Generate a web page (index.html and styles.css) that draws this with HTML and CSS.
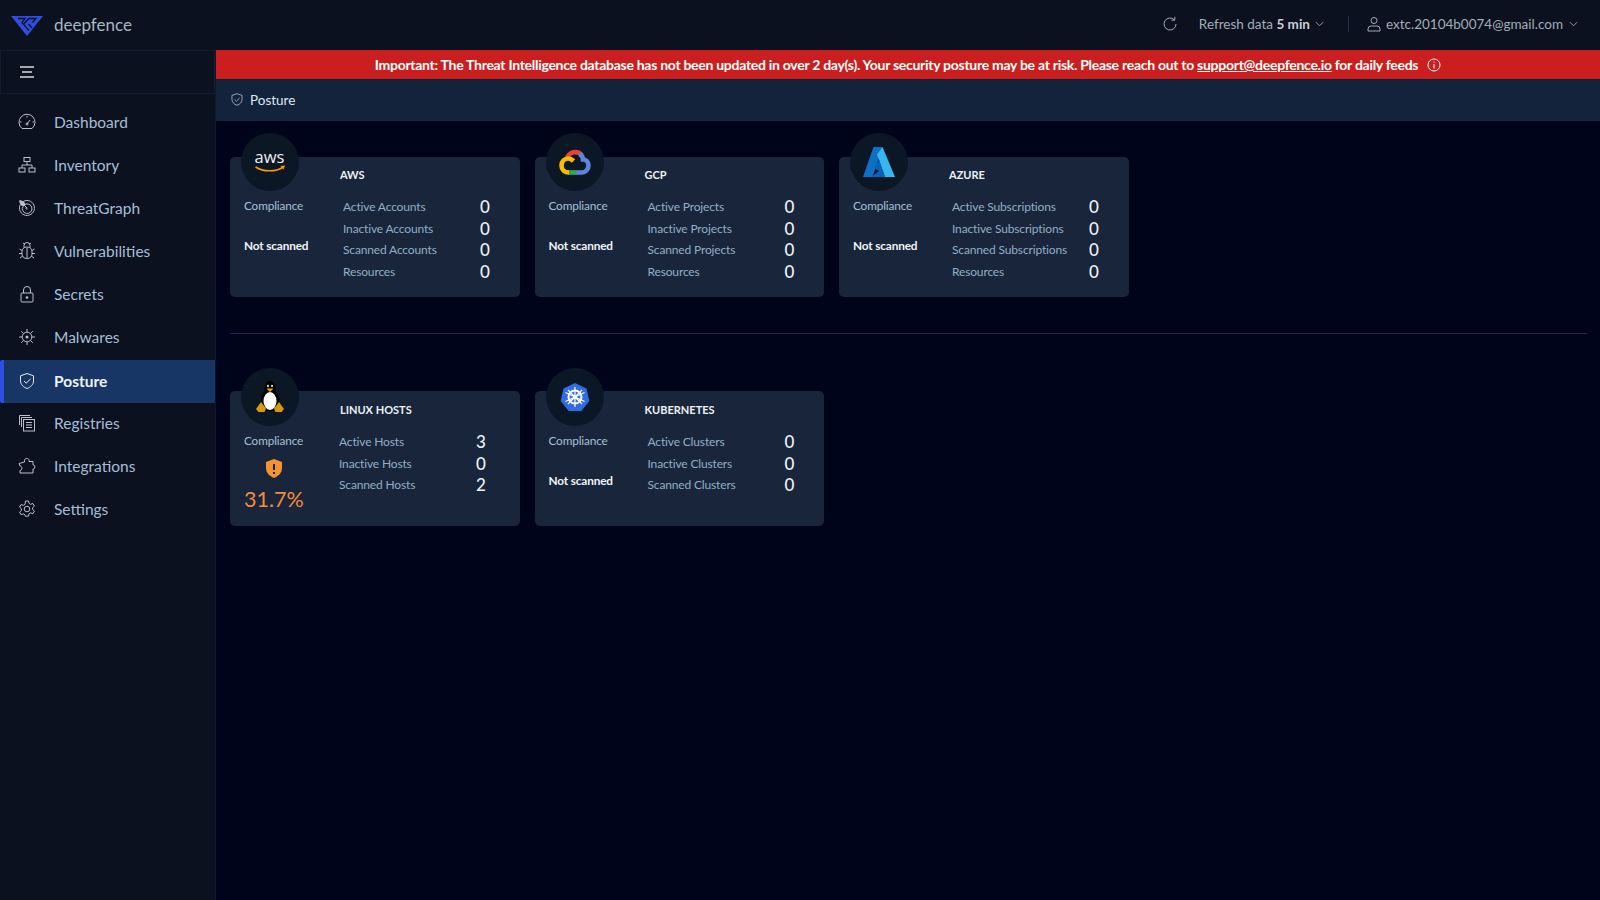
FILE: index.html
```html
<!DOCTYPE html>
<html lang="en">
<head>
  <meta charset="UTF-8" />
  <title>Posture</title>
  <link rel="stylesheet" href="styles.css">
</head>
<body>
  <header class="topbar">
    <div class="brand">
      <svg class="logo" viewBox="0 0 32 20"><path fill="#2f4de0" d="M0 0h32L16 20z"/><path class="logo-cut" d="M7 2.500h7l-3 4 7 8M13 7.500l5-5h7l-3.500 4M17.500 8l3.500 4"/></svg>
      <span>deepfence</span>
    </div>
    <div class="top-actions">
      <svg class="top-icon" viewBox="0 0 16 16"><path d="M14 8a6 6 0 1 1-1.800-4.300M12.800 0.800v3.400H9.400"/></svg>
      <span class="refresh">Refresh data <b>5 min</b></span>
      <svg class="chev" viewBox="0 0 10 6"><path d="M1 1l4 4 4-4"/></svg>
      <span class="sep"></span>
      <svg class="top-icon" viewBox="0 0 16 16"><circle cx="8" cy="4.500" r="3"/><path d="M2 15v-2a3 3 0 0 1 3-3h6a3 3 0 0 1 3 3v2z"/></svg>
      <span class="user">extc.20104b0074@gmail.com</span>
      <svg class="chev" viewBox="0 0 10 6"><path d="M1 1l4 4 4-4"/></svg>
    </div>
  </header>

  <div class="layout">
    <aside class="sidebar">
      <div class="menu-toggle">
        <svg viewBox="0 0 14 12"><path d="M0 1h14M2 6h10M0 11h14"/></svg>
      </div>
      <nav>
        <a class="nav-item"><svg viewBox="0 0 18 18"><path d="M4 15.500a8 8 0 1 1 10 0zM9 11l3-4M3.500 9H2M16 9h-1.500M9 3v1.500"/><circle cx="9" cy="11" r="1"/></svg>Dashboard</a>
        <a class="nav-item"><svg viewBox="0 0 18 18"><rect x="6" y="1.500" width="6" height="4"/><rect x="1" y="12" width="6" height="4"/><rect x="11" y="12" width="6" height="4"/><path d="M9 5.500V9M4 12V9h10v3"/></svg>Inventory</a>
        <a class="nav-item"><svg viewBox="0 0 18 18"><path d="M5.500 2.300a7.500 7.500 0 1 1-3.200 3.200M6.800 5.500a4.800 4.800 0 1 1-1.800 1.800M8.300 8.300a1 1 0 1 0 1.400 1.400"/><path class="solid" d="M2 1l4 1.500 1.500 3-2 2-3-1.500L1 2z"/><path d="M5 5l4 4"/></svg>ThreatGraph</a>
        <a class="nav-item"><svg viewBox="0 0 18 18"><rect x="4" y="5" width="10" height="11.500" rx="4.500"/><path d="M6 5.500V3.500a3 3 0 0 1 6 0v2M5 1l2 1.500M13 1l-2 1.500M9 5.500v11M1.500 7l2.500 1.500M16.500 7L14 8.500M1 11.500h3M17 11.500h-3M2 16l2.800-2M16 16l-2.800-2"/></svg>Vulnerabilities</a>
        <a class="nav-item"><svg viewBox="0 0 18 18"><rect x="3" y="8" width="12" height="9" rx="1"/><path d="M5.500 8V5a3.500 3.500 0 0 1 7 0v3"/><circle class="solid" cx="9" cy="12.500" r="1.300"/></svg>Secrets</a>
        <a class="nav-item"><svg viewBox="0 0 18 18"><circle cx="9" cy="9" r="4.800"/><path d="M9 1v3M9 14v3M1 9h3M14 9h3M3.200 3.200l2.300 2.300M12.500 12.500l2.300 2.300M14.800 3.200l-2.300 2.300M5.500 12.500l-2.300 2.300"/><circle class="solid" cx="9" cy="9" r="1.500"/></svg>Malwares</a>
        <a class="nav-item active"><svg viewBox="0 0 18 18"><path d="M9 1.500l6.500 2.300v5c0 3.800-2.800 6.300-6.500 7.700-3.700-1.400-6.500-3.900-6.500-7.700v-5zM6 9l2.200 2.200L12.500 7"/></svg>Posture</a>
        <a class="nav-item"><svg viewBox="0 0 18 18"><path d="M1.500 11V1.500H12M3.500 13V3.500H14"/><rect x="5.500" y="5.500" width="11" height="11.500"/><path d="M8 8.500h6M8 11h6M8 13.500h6"/></svg>Registries</a>
        <a class="nav-item"><svg viewBox="0 0 18 18"><path d="M6.500 3.500C6.500 1 11 .5 11 3.500V4.500H15V8C17.500 7.500 17.500 12.500 15 12V16H2V13.500C4.500 13.500 4.500 9 2 9L1 6.500 6.500 5z"/></svg>Integrations</a>
        <a class="nav-item"><svg viewBox="0 0 18 18"><circle cx="9" cy="9" r="2.800"/><path d="M7.500 1h3l.5 2.400 1.600.9 2.300-.8 1.500 2.600-1.800 1.600v1.800l1.800 1.600-1.500 2.600-2.300-.8-1.600.9-.5 2.400h-3L7 14.800l-1.600-.9-2.300.8-1.500-2.600 1.800-1.600V8.700L1.600 7.100l1.500-2.600 2.300.8L7 4.400z"/></svg>Settings</a>
      </nav>
    </aside>

    <main class="content">
      <div class="banner">
        <span>Important: The Threat Intelligence database has not been updated in over 2 day(s). Your security posture may be at risk. Please reach out to <a>support@deepfence.io</a> for daily feeds</span>
        <svg class="info" viewBox="0 0 14 14"><circle cx="7" cy="7" r="6"/><path d="M7 6v4.500M7 3.500v1"/></svg>
      </div>
      <div class="crumb">
        <svg viewBox="0 0 18 18"><path d="M9 1.500l6.500 2.300v5c0 3.800-2.800 6.300-6.500 7.700-3.700-1.400-6.500-3.900-6.500-7.700v-5zM6 9l2.200 2.200L12.500 7"/></svg>
        Posture
      </div>

      <section class="cards">
        <article class="card tall">
          <div class="badge">
            <svg viewBox="0 0 32 32"><text class="aws-text" x="15.500" y="16.500" text-anchor="middle">aws</text><path d="M1.500 21c8 5 20 5 27 0.500" fill="none" stroke="#f90" stroke-width="1.500"/><path d="M26.500 20l4.500-.5-1.500 4z" fill="#f90"/></svg>
          </div>
          <h3>AWS</h3>
          <div class="compliance"><span>Compliance</span><strong>Not scanned</strong></div>
          <dl class="stats">
            <dt>Active Accounts</dt><dd>0</dd>
            <dt>Inactive Accounts</dt><dd>0</dd>
            <dt>Scanned Accounts</dt><dd>0</dd>
            <dt>Resources</dt><dd>0</dd>
          </dl>
        </article>

        <article class="card tall">
          <div class="badge">
            <svg class="gcp" viewBox="0 0 32 26"><path stroke="#ea4335" d="M8 9.500A8.500 8.500 0 0 1 23 6.500"/><path stroke="#5c85de" d="M20.500 5C23 6.500 24 8.500 24 10.500 27 10.500 29.500 13 29.500 16.500 29.500 20.500 26.500 23.500 23 23.500H17"/><path stroke="#34a853" d="M17.500 23.500H9"/><path stroke="#fbbc05" d="M10 23.500C5.500 23.500 2.500 20.500 2.500 16.500 2.500 12.500 5.500 9.500 9.500 9.500 11.500 9.500 13 10.500 14.500 12"/></svg>
          </div>
          <h3>GCP</h3>
          <div class="compliance"><span>Compliance</span><strong>Not scanned</strong></div>
          <dl class="stats">
            <dt>Active Projects</dt><dd>0</dd>
            <dt>Inactive Projects</dt><dd>0</dd>
            <dt>Scanned Projects</dt><dd>0</dd>
            <dt>Resources</dt><dd>0</dd>
          </dl>
        </article>

        <article class="card tall">
          <div class="badge">
            <svg viewBox="0 0 32 31"><path d="M10.500 0.500h9L10 29a2 2 0 0 1-2 1.500H0z" fill="#0f6fc4"/><path d="M19.500 0.500L32 30.500H22L14 8z" fill="#35b8f0"/><path d="M16 13l6 17.500H8l8-6-5-3z" fill="#0a62b8"/></svg>
          </div>
          <h3>AZURE</h3>
          <div class="compliance"><span>Compliance</span><strong>Not scanned</strong></div>
          <dl class="stats">
            <dt>Active Subscriptions</dt><dd>0</dd>
            <dt>Inactive Subscriptions</dt><dd>0</dd>
            <dt>Scanned Subscriptions</dt><dd>0</dd>
            <dt>Resources</dt><dd>0</dd>
          </dl>
        </article>
      </section>

      <hr class="divider">

      <section class="cards lower">
        <article class="card short linux">
          <div class="badge">
            <svg viewBox="0 0 30 32"><ellipse cx="15" cy="7" rx="5.500" ry="7" fill="#000"/><ellipse cx="15" cy="19" rx="9.500" ry="11" fill="#000"/><ellipse cx="15" cy="20" rx="6.500" ry="9" fill="#fff"/><ellipse cx="13" cy="5" rx="1" ry="1.300" fill="#ddd"/><ellipse cx="17" cy="5" rx="1" ry="1.300" fill="#ddd"/><path d="M11.500 7.500h7L15 11z" fill="#e8a80c"/><path d="M1 28l5-7 5 6.500-1.500 3.500-6 0zM29 28l-5-7-5 6.500 1.500 3.500 6 0z" fill="#d89a0a"/></svg>
          </div>
          <h3>LINUX HOSTS</h3>
          <div class="compliance"><span>Compliance</span>
            <svg class="warn" viewBox="0 0 16 19"><path d="M8 0l8 3v6c0 5-3.500 8-8 10-4.500-2-8-5-8-10V3z" fill="#f59331"/><path d="M8 5v6M8 13v2" stroke="#1a2438" stroke-width="2"/></svg>
            <em>31.7%</em>
          </div>
          <dl class="stats">
            <dt>Active Hosts</dt><dd>3</dd>
            <dt>Inactive Hosts</dt><dd>0</dd>
            <dt>Scanned Hosts</dt><dd>2</dd>
          </dl>
        </article>

        <article class="card short">
          <div class="badge">
            <svg viewBox="0 0 32 32"><path d="M16 2l11.500 5.500 2.800 12.500-8 10H9.700l-8-10L4.500 7.500z" fill="#326ce5"/><g fill="none" stroke="#fff"><circle cx="16" cy="16" r="6.500" stroke-width="2"/><path d="M16 6v20M6.500 11.500l19 9M25.500 11.500l-19 9M9 23l14-14M23 23L9 9" stroke-width="1.200"/></g><circle cx="16" cy="16" r="2" fill="#fff"/></svg>
          </div>
          <h3>KUBERNETES</h3>
          <div class="compliance"><span>Compliance</span><strong>Not scanned</strong></div>
          <dl class="stats">
            <dt>Active Clusters</dt><dd>0</dd>
            <dt>Inactive Clusters</dt><dd>0</dd>
            <dt>Scanned Clusters</dt><dd>0</dd>
          </dl>
        </article>
      </section>
    </main>
  </div>
</body>
</html>
```

FILE: styles.css
```css
* {
  box-sizing: border-box;
}

body {
  margin: 0;
  height: 900px;
  overflow: hidden;
  background: #00041a;
  font-family: "Lato", "Noto Sans", sans-serif;
  color: #b0c4d8;
}

svg {
  fill: none;
  stroke: currentColor;
  stroke-width: 1;
  flex-shrink: 0;
}

svg .solid {
  fill: currentColor;
  stroke: none;
}

.topbar {
  height: 50px;
  background: #0b111e;
  display: flex;
  align-items: center;
  justify-content: space-between;
  padding: 0 22px 2px 11px;
}

.brand {
  display: flex;
  align-items: center;
  gap: 11px;
  font-size: 17px;
  color: #a9b6c4;
}

.logo {
  width: 32px;
  height: 20px;
  stroke: none;
  margin-top: 3px;
}

.logo-cut {
  stroke: #0b111e;
  stroke-width: 1.300;
}

.top-actions {
  display: flex;
  align-items: center;
  font-size: 13.500px;
  color: #a3adb9;
}

.top-icon {
  width: 16px;
  height: 16px;
}

.refresh {
  margin-left: 21px;
}

.refresh b {
  color: #c9d0d8;
}

.chev {
  width: 9px;
  height: 6px;
  margin-left: 5px;
}

.sep {
  width: 1px;
  height: 16px;
  background: #253249;
  margin: 0 17px 0 24px;
}

.user {
  margin-left: 4px;
  margin-right: 1px;
}

.layout {
  display: flex;
  height: 850px;
}

.sidebar {
  width: 216px;
  background: #0b111e;
  border-right: 1px solid #0d1729;
}

.menu-toggle {
  height: 44px;
  border: 1px solid #111d33;
  display: flex;
  align-items: center;
  padding-left: 19px;
  color: #d5dbe2;
}

.menu-toggle svg {
  width: 14px;
  height: 12px;
  stroke-width: 1.500;
}

nav {
  margin-top: 6px;
}

.nav-item {
  height: 43.100px;
  display: flex;
  align-items: center;
  gap: 18px;
  padding-left: 18px;
  font-size: 15.500px;
  color: #a5bfd8;
}

.nav-item svg {
  width: 18px;
  height: 18px;
  color: #b8c2cc;
}

.nav-item.active {
  background: #173665;
  border-left: 4px solid #2d4fe6;
  border-radius: 2px 0 0 2px;
  padding-left: 14px;
  margin-top: 1px;
  margin-bottom: -1px;
  color: #f0f4f8;
  font-weight: 700;
}

.nav-item.active svg {
  color: #e8edf2;
}

.content {
  flex: 1;
  min-width: 0;
}

.banner {
  height: 29px;
  background: #cb1f1f;
  color: #fff;
  font-size: 14px;
  letter-spacing: -0.280px;
  font-weight: 700;
  display: flex;
  align-items: center;
  justify-content: center;
}

.banner a {
  text-decoration: underline;
}

.info {
  width: 14px;
  height: 14px;
  margin-left: 9px;
}

.crumb {
  height: 42px;
  background: #13233b;
  display: flex;
  align-items: center;
  gap: 6px;
  padding: 0 0 1px 14px;
  font-size: 13.500px;
  color: #dbe8f5;
}

.crumb svg {
  width: 14px;
  height: 15px;
  color: #b8c2cc;
}

.cards {
  display: grid;
  grid-template-columns: repeat(3, 289.500px);
  gap: 15px;
  padding: 36px 0 0 14px;
}

.cards.lower {
  padding-top: 57px;
}

.card {
  position: relative;
  background: #18253b;
  border-radius: 5px;
  padding: 10px 0 0 14px;
  display: grid;
  grid-template-columns: 99px 151px;
  grid-template-rows: 16px auto;
  row-gap: 13px;
}

.tall {
  height: 140px;
}

.short {
  height: 135px;
  padding-top: 11px;
}

.badge {
  position: absolute;
  left: 11px;
  top: -24px;
  width: 58px;
  height: 58px;
  border-radius: 50%;
  background: #0c1726;
  display: flex;
  align-items: center;
  justify-content: center;
}

.short .badge {
  top: -23px;
}

.badge svg {
  width: 32px;
  height: 32px;
  stroke: none;
}

.badge .gcp {
  stroke-width: 4.600;
}

.aws-text {
  font-family: "Open Sans", sans-serif;
  font-size: 16.500px;
  fill: #f2f2f2;
}

h3 {
  grid-column: 2;
  margin: 0 0 0 -3px;
  font-size: 11px;
  line-height: 16px;
  font-weight: 700;
  color: #eef2f6;
}

.compliance {
  grid-column: 1;
  display: flex;
  flex-direction: column;
  padding-top: 2px;
  font-size: 11.800px;
  letter-spacing: -0.150px;
  color: #a5c0d8;
}

.compliance span {
  line-height: 16px;
}

.compliance strong {
  margin-top: 24px;
  color: #f2f5f8;
  font-weight: 700;
  line-height: 16px;
}

.warn {
  width: 16px;
  height: 19px;
  stroke: none;
  margin: 10px 0 0 22px;
}

.compliance em {
  font-style: normal;
  font-size: 21.500px;
  letter-spacing: 0;
  line-height: 28px;
  margin-top: 7px;
  color: #f58b3a;
}

.stats {
  margin: 0;
  display: grid;
  grid-template-columns: 137px auto;
  grid-auto-rows: 21.500px;
  align-items: center;
}

.stats dt {
  font-size: 12px;
  letter-spacing: -0.150px;
  color: #93aec6;
  white-space: nowrap;
}

.stats dd {
  margin: 0;
  font-size: 17px;
  font-weight: 500;
  color: #eef2f6;
}

.linux .stats {
  margin-left: -4px;
}

.divider {
  margin: 36px 13px 0 14px;
  border: 0;
  border-top: 1px solid #1c2a52;
}
```
